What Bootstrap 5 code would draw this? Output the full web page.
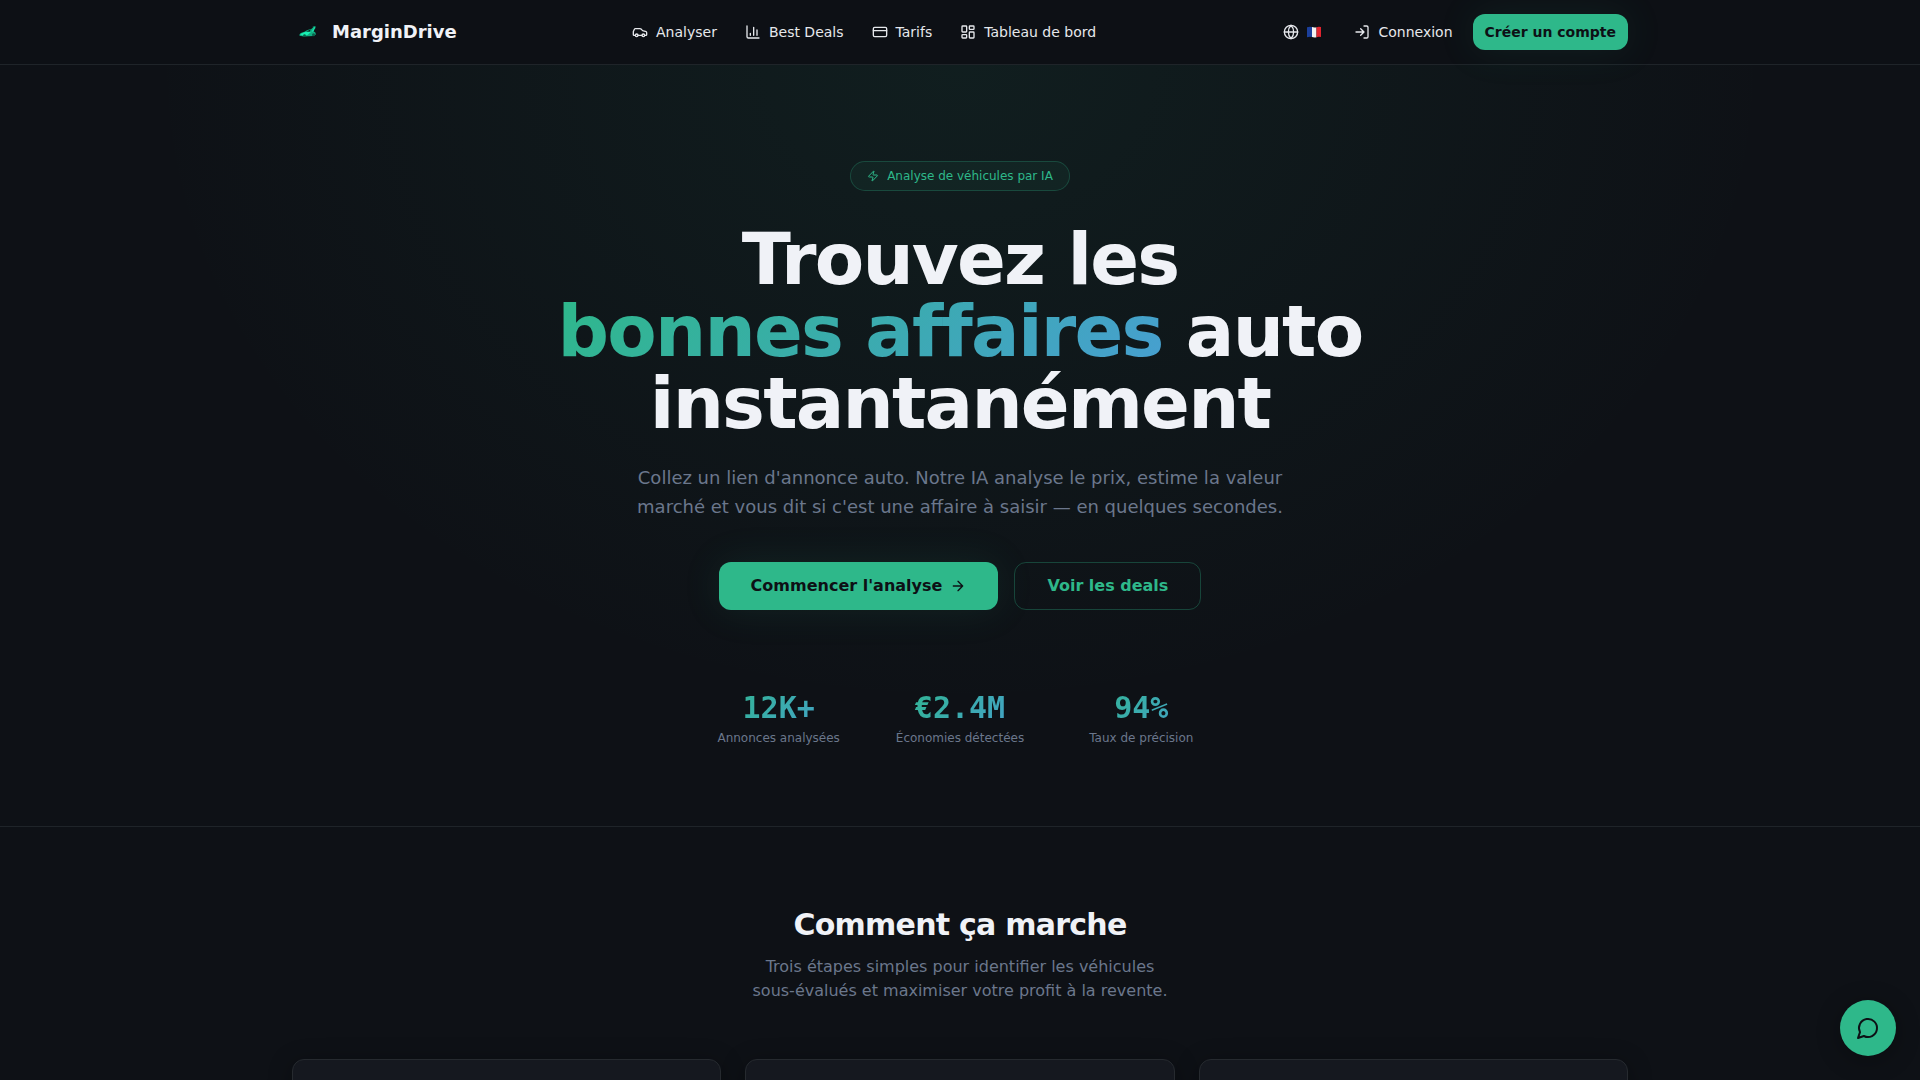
<!DOCTYPE html>
<html lang="fr" data-bs-theme="dark">
<head>
<meta charset="utf-8">
<meta name="viewport" content="width=device-width, initial-scale=1">
<title>MarginDrive</title>
<link href="https://cdn.jsdelivr.net/npm/bootstrap@5.3.0/dist/css/bootstrap.min.css" rel="stylesheet">
<style>
  :root { --md-bg: #0e1116; --md-fg: #f0f2f7; --md-muted: #6b778c; --md-primary: #2eb88a; --md-line: #1f2429; }
  body { background: var(--md-bg); color: var(--md-fg); font-family: "DejaVu Sans", sans-serif; overflow-x: hidden; }
  .wrap { max-width: 1400px; padding-inline: 32px; }
  .ico { width: 16px; height: 16px; fill: none; stroke: currentColor; stroke-width: 2; stroke-linecap: round; stroke-linejoin: round; flex: none; }
  .topbar { background: #0d1015; border-bottom: 1px solid var(--md-line); }
  .topbar .wrap { height: 64px; }
  .brand-name { font-size: 18px; line-height: 28px; }
  .menu-link { font-size: 14px; line-height: 20px; padding: 8px 12px; color: #e6e8ec; border: 0; background: none; }
  .flag { width: 15px; height: 16px; }
  .btn-main, .btn-main:hover { background: var(--md-primary); color: #0d1015; font-weight: 600; border: 0; border-radius: 12px; box-shadow: 0 0 40px rgba(46,184,138,.1); }
  .btn-sm-md { font-size: 14px; line-height: 20px; padding: 8px 12px; }
  .btn-lg-md { font-size: 16px; line-height: 24px; padding: 12px 32px; border-radius: 12px; }
  .btn-line, .btn-line:hover { border: 1px solid rgba(46,184,138,.3); color: var(--md-primary); font-weight: 600; padding-block: 11px; }
  .hero { padding: 96px 0 80px; border-bottom: 1px solid var(--md-line); background: radial-gradient(ellipse at top, rgba(46,184,138,.08), transparent 60%); }
  .pill { font-size: 12px; line-height: 16px; padding: 6px 16px; color: var(--md-primary); border: 1px solid rgba(46,184,138,.25); background: rgba(46,184,138,.06); }
  .pill .ico { width: 12px; height: 12px; }
  .hero-title { font-size: 72px; line-height: 72px; letter-spacing: -0.025em; max-width: 896px; margin: 32px auto 24px; color: var(--md-fg); }
  .grad { background: linear-gradient(135deg, #2eb88a, #479fd1); -webkit-background-clip: text; background-clip: text; color: transparent; }
  .hero-text { font-size: 18px; line-height: 29px; color: var(--md-muted); max-width: 672px; margin: 0 auto 41px; }
  .stats { max-width: 512px; margin: 80px auto 0; gap: 32px; }
  .stat-num { font: 700 30px/36px "DejaVu Sans Mono", monospace; }
  .stat-label { font-size: 12px; line-height: 16px; color: var(--md-muted); }
  .how { padding: 80px 0; }
  .how-title { font-size: 30px; line-height: 36px; letter-spacing: -0.025em; margin-bottom: 12px; color: var(--md-fg); }
  .how-text { font-size: 16px; line-height: 24px; color: var(--md-muted); max-width: 424px; margin: 0 auto 56px; }
  .step { height: 240px; background: #15181f; border: 1px solid #262a2f; border-radius: 12px; box-shadow: 0 4px 24px rgba(0,0,0,.3); }
  .chat { right: 24px; bottom: 24px; width: 56px; height: 56px; background: var(--md-primary); color: #0d1015; border: 0; box-shadow: 0 4px 24px rgba(0,0,0,.3); z-index: 5; }
  .chat .ico { width: 24px; height: 24px; }
</style>
<script src="https://cdn.jsdelivr.net/npm/bootstrap@5.3.0/dist/js/bootstrap.bundle.min.js"></script>
</head>
<body>
<header class="topbar">
  <div class="container-fluid wrap d-flex align-items-center justify-content-between">
    <a href="#" class="d-flex align-items-center gap-2 text-decoration-none text-reset">
      <svg width="32" height="32" viewBox="0 0 32 32" aria-hidden="true">
        <path d="M7.500 18.500c.5-1.500 3-2.300 5-2.800 2-1.500 4-2.500 6.500-2.500l2.200-2-.7-.4 3-.8-.3 2.800-.7-.5-1.500 2.900c2 .4 2.800 1.500 2.800 3.200l-2 1.600-10 .6-4.300-.8z" fill="#0fae81"/>
        <path d="M8 18.200l5-2.300h6l-3.500 3-5 .6z" fill="#19f0b3"/>
        <path d="M19.500 15.500l3-4.500.9.200-2 4.500z" fill="#19e0a8"/>
        <path d="M14.300 15.600l4.200-1.800-.6 1.800z" fill="#0d1015"/>
        <circle cx="12.500" cy="19.500" r="1.300" fill="#0a5f48"/><circle cx="21.500" cy="18.800" r="1.500" fill="#0a5f48"/>
      </svg>
      <span class="brand-name fw-bold">MarginDrive</span>
    </a>
    <nav class="d-flex align-items-center gap-1">
      <a href="#" class="menu-link d-flex align-items-center gap-2 text-decoration-none"><svg class="ico" viewBox="0 0 24 24"><path d="M19 17h2c.6 0 1-.4 1-1v-3c0-.9-.7-1.700-1.500-1.900C18.700 10.600 16 10 16 10s-1.300-1.400-2.200-2.300c-.5-.4-1.100-.7-1.800-.7H5c-.6 0-1.100.4-1.400.9l-1.400 2.900A3.700 3.700 0 0 0 2 12v4c0 .6.4 1 1 1h2"/><circle cx="7" cy="17" r="2"/><path d="M9 17h6"/><circle cx="17" cy="17" r="2"/></svg>Analyser</a>
      <a href="#" class="menu-link d-flex align-items-center gap-2 text-decoration-none"><svg class="ico" viewBox="0 0 24 24"><path d="M3 3v16a2 2 0 0 0 2 2h16M18 17V9M13 17V5M8 17v-3"/></svg>Best Deals</a>
      <a href="#" class="menu-link d-flex align-items-center gap-2 text-decoration-none"><svg class="ico" viewBox="0 0 24 24"><rect width="20" height="14" x="2" y="5" rx="2"/><path d="M2 10h20"/></svg>Tarifs</a>
      <a href="#" class="menu-link d-flex align-items-center gap-2 text-decoration-none"><svg class="ico" viewBox="0 0 24 24"><rect width="7" height="9" x="3" y="3" rx="1"/><rect width="7" height="5" x="14" y="3" rx="1"/><rect width="7" height="9" x="14" y="12" rx="1"/><rect width="7" height="5" x="3" y="16" rx="1"/></svg>Tableau de bord</a>
    </nav>
    <div class="d-flex align-items-center gap-2">
      <button type="button" class="menu-link d-flex align-items-center" aria-label="Langue : français"><svg class="ico me-1" viewBox="0 0 24 24"><circle cx="12" cy="12" r="10"/><path d="M12 2a14.500 14.500 0 0 0 0 20 14.500 14.500 0 0 0 0-20M2 12h20"/></svg>
        <svg class="flag ms-1" viewBox="0 0 15 16"><path d="M0 3.300Q2.500 2.200 5 3v10Q2.500 12.400 0 13.300z" fill="#1b3f9b"/><path d="M5 3q2 .7 4.500.2v10Q7 13.700 5 13z" fill="#f2f2f2"/><path d="M9.500 3.200q2.200-.6 4.500-.1v10q-2.300-.5-4.500.1z" fill="#e0242f"/></svg></button>
      <a href="#" class="menu-link d-flex align-items-center gap-2 text-decoration-none"><svg class="ico" viewBox="0 0 24 24"><path d="M15 3h4a2 2 0 0 1 2 2v14a2 2 0 0 1-2 2h-4M10 17l5-5-5-5M15 12H3"/></svg>Connexion</a>
      <a href="#" class="btn btn-main btn-sm-md">Créer un compte</a>
    </div>
  </div>
</header>
<main>
  <section class="hero text-center">
    <div class="container-fluid wrap">
      <div class="pill rounded-pill d-inline-flex align-items-center gap-2"><svg class="ico" viewBox="0 0 24 24"><path d="M4 14a1 1 0 0 1-.78-1.630l9.900-10.200a.5.5 0 0 1 .86.460l-1.920 6.020A1 1 0 0 0 13 10h7a1 1 0 0 1 .78 1.630l-9.900 10.200a.5.5 0 0 1-.86-.46l1.920-6.020A1 1 0 0 0 11 14z"/></svg>Analyse de véhicules par IA</div>
      <h1 class="hero-title fw-bold">Trouvez les <br><span class="grad">bonnes affaires</span> auto instantanément</h1>
      <p class="hero-text">Collez un lien d'annonce auto. Notre IA analyse le prix, estime la valeur marché et vous dit si c'est une affaire à saisir — en quelques secondes.</p>
      <div class="d-flex justify-content-center gap-3">
        <a href="#" class="btn btn-main btn-lg-md d-flex align-items-center gap-2">Commencer l'analyse<svg class="ico" viewBox="0 0 24 24"><path d="M5 12h14M12 5l7 7-7 7"/></svg></a>
        <a href="#" class="btn btn-lg-md btn-line">Voir les deals</a>
      </div>
      <div class="stats d-flex">
        <div class="col"><div class="stat-num grad mb-1">12K+</div><div class="stat-label">Annonces analysées</div></div>
        <div class="col"><div class="stat-num grad mb-1">€2.4M</div><div class="stat-label">Économies détectées</div></div>
        <div class="col"><div class="stat-num grad mb-1">94%</div><div class="stat-label">Taux de précision</div></div>
      </div>
    </div>
  </section>
  <section class="how text-center">
    <div class="container-fluid wrap">
      <h2 class="how-title fw-bold">Comment ça marche</h2>
      <p class="how-text">Trois étapes simples pour identifier les véhicules sous-évalués et maximiser votre profit à la revente.</p>
      <div class="row row-cols-3 g-4">
        <div class="col"><div class="step"></div></div>
        <div class="col"><div class="step"></div></div>
        <div class="col"><div class="step"></div></div>
      </div>
    </div>
  </section>
</main>
<button type="button" class="chat position-fixed rounded-circle d-flex align-items-center justify-content-center p-0" aria-label="Ouvrir le chat"><svg class="ico" viewBox="0 0 24 24"><path d="M7.900 20A9 9 0 1 0 4 16.100L2 22Z"/></svg></button>
</body>
</html>
